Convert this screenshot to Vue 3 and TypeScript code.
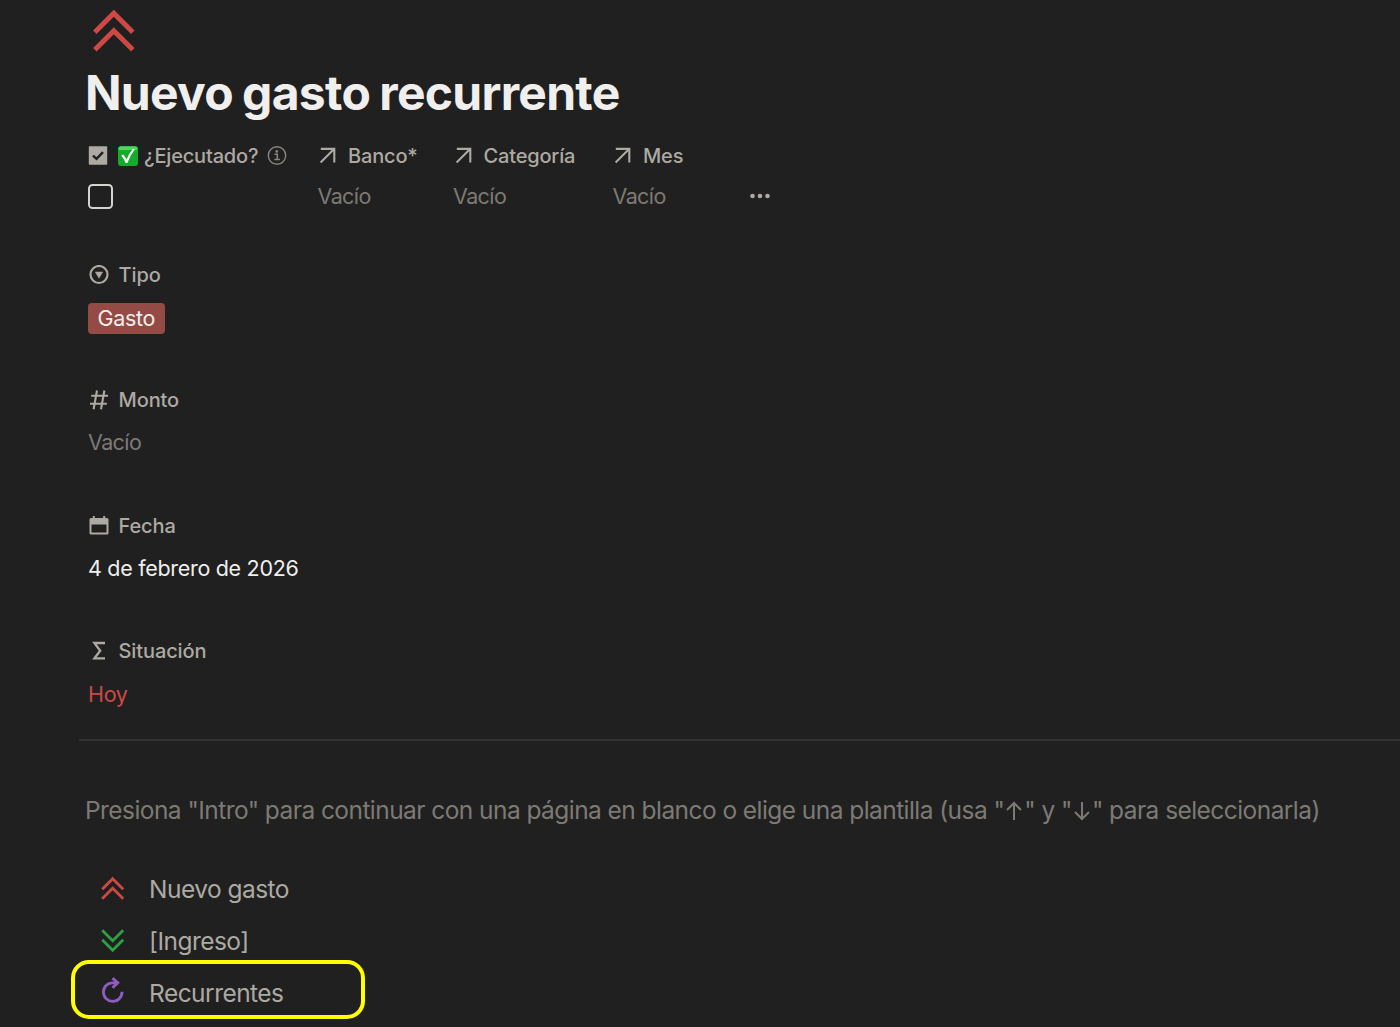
<script setup lang="ts">
import { ref } from 'vue'

interface Relation {
  name: string
  width: string
}

const executed = ref(false)
const selected = ref(2)

const relations: Relation[] = [
  { name: 'Banco*', width: 'w-bank' },
  { name: 'Categoría', width: 'w-category' },
  { name: 'Mes', width: 'w-month' }
]

const properties = [
  { key: 'select', label: 'Tipo', value: 'Gasto', kind: 'tag' },
  { key: 'number', label: 'Monto', value: 'Vacío', kind: 'empty' },
  { key: 'date', label: 'Fecha', value: '4 de febrero de 2026', kind: 'date' },
  { key: 'formula', label: 'Situación', value: 'Hoy', kind: 'red' }
]

const templates = [
  { icon: 'up', label: 'Nuevo gasto' },
  { icon: 'down', label: '[Ingreso]' },
  { icon: 'repeat', label: 'Recurrentes' }
]

const toggleExecuted = () => {
  executed.value = !executed.value
}
</script>

<template>
  <div class="page">
    <svg class="page-icon" viewBox="0 0 42 42">
      <path d="M1.8 22.2 20.8 3.2l19 19M1.8 39.7l19-19 19 19" />
    </svg>
    <h1 class="title">Nuevo gasto recurrente</h1>

    <!-- Pinned properties -->
    <div class="pinned">
      <div class="pinned-col w-done">
        <div class="label">
          <svg class="label-icon" viewBox="0 0 20 20">
            <rect x="0.8" y="0.3" width="18.4" height="18.4" rx="0.8" fill="#ada9a3" />
            <path d="M5 9.7 8.5 12.900 15 6.100" fill="none" stroke="#202020" stroke-width="2.4" />
          </svg>
          <svg class="check-emoji" viewBox="0 0 20 20">
            <rect width="20" height="20" rx="3" fill="#16ab2b" />
            <path d="M3 0.6h14a2.4 2.4 0 0 1 2.4 2.4v1H0.6V3A2.4 2.4 0 0 1 3 0.6z" fill="#5fce62" />
            <path d="M3.2 9.8 5.3 8.4Q7.4 11 8.5 13.4 11.4 7 15 2.8l1.8.5Q12 9.8 9.4 16.9H7.6Q6.2 12.8 3.2 9.8z" fill="#fff" />
          </svg>
          <span class="label-text done-text">¿Ejecutado?</span>
          <svg class="info-icon" viewBox="0 0 20 20">
            <circle cx="10" cy="9.5" r="8.7" fill="none" stroke="#8a8680" stroke-width="1.4" />
            <circle cx="9.8" cy="5.4" r="1.3" fill="#8a8680" />
            <path d="M7.6 8.2h2.7v5.2M7.3 13.6h5.6" fill="none" stroke="#8a8680" stroke-width="1.5" />
          </svg>
        </div>
        <div class="pinned-value">
          <span class="checkbox" :class="{ checked: executed }" @click="toggleExecuted"></span>
        </div>
      </div>
      <div v-for="item in relations" :key="item.name" class="pinned-col" :class="item.width">
        <div class="label">
          <svg class="label-icon" viewBox="0 0 20 20">
            <path d="M2.8 2.9h13.500v13.500M16.100 3.100 2.600 16.600" fill="none" stroke="#ada9a3" stroke-width="2.1" />
          </svg>
          <span class="label-text">{{ item.name }}</span>
        </div>
        <div class="pinned-value empty">Vacío</div>
      </div>
      <div class="more">
        <svg viewBox="0 0 20 6">
          <circle cx="2.5" cy="3" r="2.3" />
          <circle cx="10" cy="3" r="2.3" />
          <circle cx="17.5" cy="3" r="2.3" />
        </svg>
      </div>
    </div>

    <!-- Stacked properties -->
    <div class="properties">
      <div v-for="item in properties" :key="item.key" class="property">
        <div class="label">
          <svg v-if="item.key === 'select'" class="label-icon" viewBox="0 0 20 20">
            <circle cx="10" cy="9.5" r="8.5" fill="none" stroke="#ada9a3" stroke-width="2.2" />
            <path d="M6.3 7h7.4L10 13.2z" fill="#ada9a3" stroke="#ada9a3" stroke-width="0.5" stroke-linejoin="round" />
          </svg>
          <svg v-else-if="item.key === 'number'" class="label-icon" viewBox="0 0 20 20">
            <path d="M8 0.5 4.6 19.2M15.4 0.5 12 19.2M2.2 5.8h16.8M1 13.7h16.8" fill="none" stroke="#ada9a3" stroke-width="2.1" />
          </svg>
          <svg v-else-if="item.key === 'date'" class="label-icon" viewBox="0 0 20 20">
            <path fill-rule="evenodd" d="M3.8 0h2v2h8.4V0h2v2H18a1.5 1.5 0 0 1 1.5 1.5V17a1.5 1.5 0 0 1-1.5 1.5H2A1.5 1.5 0 0 1 .5 17V3.5A1.5 1.5 0 0 1 2 2h1.8zM2.5 8.5v8h15v-8z" fill="#ada9a3" />
          </svg>
          <svg v-else class="label-icon" viewBox="0 0 20 20">
            <path d="M16 2H5.4L11.2 9.7 5.4 17.4H16" fill="none" stroke="#ada9a3" stroke-width="2.3" />
          </svg>
          <span class="label-text">{{ item.label }}</span>
        </div>
        <div class="value" :class="item.kind">
          <span>{{ item.value }}</span>
        </div>
      </div>
    </div>

    <div class="divider"></div>

    <p class="hint">
      Presiona "Intro" para continuar con una página en blanco o elige una plantilla (usa "<svg class="arrow" viewBox="0 0 16 20"><path d="M8 19V2M1 9l7-7 7 7" /></svg>" y "<svg class="arrow" viewBox="0 0 16 20"><path d="M8 1v17M1 11l7 7 7-7" /></svg>" para seleccionarla)
    </p>

    <!-- Templates -->
    <div class="templates">
      <div
        v-for="(item, index) in templates"
        :key="item.label"
        class="template"
        :class="{ selected: selected === index }"
        @click="selected = index"
      >
        <svg class="template-icon" :class="item.icon" viewBox="0 0 24 24">
          <path v-if="item.icon === 'up'" d="M1.2 12.2 11.7 1.7l10.5 10.5M1.2 21.7l10.5-10.5 10.5 10.5" />
          <path v-else-if="item.icon === 'down'" d="M1.2 1.2 11.7 11.7 22.200 1.2M1.2 10.700l10.500 10.500 10.500-10.500" />
          <path v-else d="M21 11.800A9.300 9.300 0 1 1 11.700 2.800H16.500M11.500-1.900 16.800 2.800 11.500 7.700" />
        </svg>
        <span class="template-label">{{ item.label }}</span>
      </div>
    </div>
  </div>
</template>

<style>
body {
  margin: 0;
  background: #202020;
}
</style>

<style scoped>
.page {
  box-sizing: border-box;
  height: 1027px;
  overflow: hidden;
  padding: 10px 0 0 71px;
  background: #202020;
  font-family: Inter, "Liberation Sans", sans-serif;
  color: #ada9a3;
}

.page-icon {
  display: block;
  width: 42px;
  height: 42px;
  margin-left: 22px;
  fill: none;
  stroke: #cd4945;
  stroke-width: 5;
}

.title {
  margin: 11px 0 0 14px;
  height: 60px;
  line-height: 60px;
  font-size: 48px;
  font-weight: 700;
  letter-spacing: -0.72px;
  word-spacing: -1.5px;
  color: #f0efed;
  white-space: nowrap;
}

.pinned {
  display: flex;
  margin: 17px 0 0 16.5px;
}

.pinned-col {
  flex: none;
}

.w-done {
  width: 230px;
}

.w-bank {
  width: 135.5px;
}

.w-category {
  width: 159.5px;
}

.w-month {
  width: 137px;
}

.label {
  display: flex;
  align-items: center;
  height: 30px;
}

.pinned .label {
  padding-top: 1px;
  height: 29px;
}

.label-icon {
  flex: none;
  width: 20px;
  height: 20px;
  margin-left: 0.5px;
}

.label-text {
  margin-left: 10px;
  font-size: 20px;
  font-weight: 500;
  letter-spacing: -0.1px;
  line-height: 30px;
  white-space: nowrap;
}

.pinned .label-text {
  padding-top: 1px;
  letter-spacing: -0.17px;
}

.check-emoji {
  width: 20px;
  height: 20px;
  margin-left: 10px;
}

.label .done-text {
  margin-left: 6px;
}

.info-icon {
  width: 20px;
  height: 20px;
  margin-left: 8.5px;
}

.pinned-value {
  display: flex;
  align-items: center;
  height: 30px;
  margin-top: 11px;
  font-size: 21.5px;
  letter-spacing: -0.6px;
}

.checkbox {
  box-sizing: border-box;
  width: 25px;
  height: 25px;
  border: 2px solid #d5d3d0;
  border-radius: 4.5px;
  cursor: pointer;
}

.checkbox.checked {
  background: #2783de;
}

.empty {
  color: #7d7a75;
}

.more {
  display: flex;
  align-items: center;
  height: 30px;
  margin-top: 41px;
}

.more svg {
  width: 20px;
  height: 6px;
  fill: #ada9a3;
}

.properties {
  margin: 49px 0 0 17px;
}

.property {
  height: 125.3px;
}

.value {
  display: flex;
  align-items: center;
  height: 30px;
  margin-top: 13px;
  font-size: 21.5px;
  letter-spacing: -0.3px;
  color: #f0efed;
  white-space: nowrap;
}

.value.empty {
  margin-top: 12px;
  letter-spacing: -0.6px;
  color: #7d7a75;
}

.value.date {
  margin-top: 12.4px;
}

.value.red {
  color: #cd4945;
}

.value.tag span {
  box-sizing: border-box;
  height: 31px;
  padding: 0 9.5px;
  border-radius: 4px;
  background: #954b45;
  line-height: 31px;
}

.divider {
  height: 2px;
  margin: -22.2px 0 0 8px;
  background: #333332;
}

.hint {
  margin: 51px 0 0 14px;
  height: 36px;
  line-height: 36px;
  font-size: 24.5px;
  letter-spacing: -0.56px;
  color: #7d7a75;
  white-space: nowrap;
}

.arrow {
  width: 16px;
  height: 20px;
  margin: 0 2px;
  vertical-align: -1.5px;
  fill: none;
  stroke: #7d7a75;
  stroke-width: 2;
}

.templates {
  margin-top: 35px;
}

.template {
  position: relative;
  display: flex;
  align-items: center;
  box-sizing: border-box;
  width: 294px;
  height: 52px;
  padding-left: 30px;
  cursor: pointer;
}

/* Highlight ring is slightly taller than the row */
.template.selected::after {
  content: "";
  position: absolute;
  inset: -7px 0 0 0;
  border: 4px solid #ffff00;
  border-radius: 18px;
  pointer-events: none;
}

.template-icon {
  flex: none;
  width: 24px;
  height: 24px;
  fill: none;
  stroke-width: 2.8;
  overflow: visible;
}

.template-icon.up {
  stroke: #cd4945;
}

.template-icon.down {
  stroke: #2f9e44;
}

.template-icon.repeat {
  margin-bottom: 2px;
  stroke: #8f5cc4;
}

.template-label {
  margin-left: 24px;
  font-size: 24.5px;
  letter-spacing: -0.53px;
  line-height: 36px;
  white-space: nowrap;
}
</style>
